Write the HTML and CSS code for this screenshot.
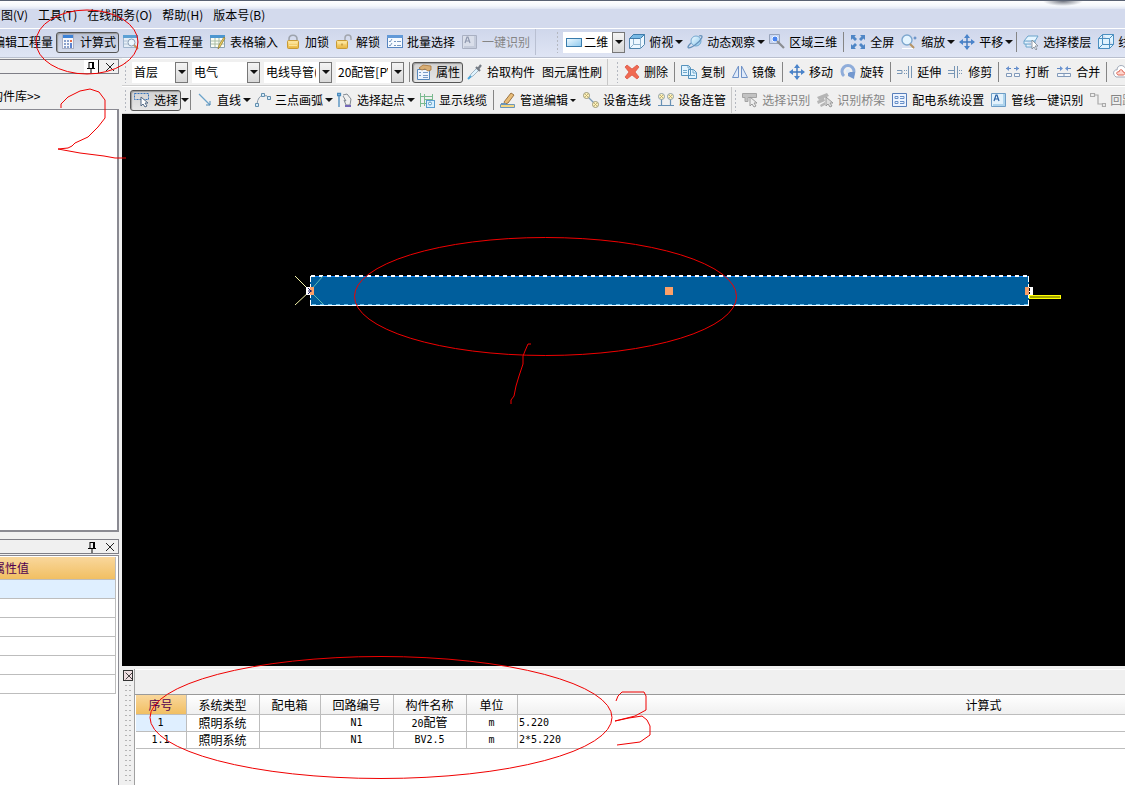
FILE: index.html
```html
<!DOCTYPE html>
<html lang="zh-CN">
<head>
<meta charset="utf-8">
<title>计算式</title>
<link rel="stylesheet" href="styles.css">
</head>
<body>
<svg class="sprite" aria-hidden="true">
  <defs>
    <linearGradient id="gold" x1="0" y1="0" x2="0" y2="1"><stop offset="0" stop-color="#ffe9a0"/><stop offset="1" stop-color="#e8b33c"/></linearGradient>
    <linearGradient id="sky" x1="0" y1="0" x2="1" y2="1"><stop offset="0" stop-color="#f0faff"/><stop offset="1" stop-color="#8cc8ee"/></linearGradient>
  </defs>
  <symbol id="calc" viewBox="0 0 16 16"><rect x="2.500" y=".5" width="11" height="14" fill="#f7f8fc" stroke="#a9b0c4"/><path d="M3 1h10v3H3z" fill="#3d82d6"/><path d="M4 6h2v2H4zM7 6h2v2H7zM4 9h2v2H4zM7 9h2v2H7zM4 12h2v2H4zM7 12h2v2H7z" fill="#8ba2cc"/><path d="M10 6h2v2h-2z" fill="#e46a4a"/><path d="M10 9h2v5h-2z" fill="#5c83d0"/></symbol>
  <symbol id="view" viewBox="0 0 16 16"><path d="M.5 1.500h14v12H.5z" fill="#e4edf6" stroke="#9fb4cc"/><path d="M0 1h15v3H0z" fill="#5ca0d4"/><path d="M1 7h4M1 10h4" stroke="#b2c4d8"/><circle cx="8.500" cy="8.500" r="3.500" fill="#edf8ff" stroke="#8b9db4"/><path d="M11 11l4 4" stroke="#c09868" stroke-width="2"/></symbol>
  <symbol id="sheet" viewBox="0 0 16 16"><path d="M.5 1.500h14v12H.5z" fill="#fbfdf6" stroke="#8da3b0"/><path d="M0 1h15v3H0z" fill="#4c96d0"/><path d="M1 7h13M1 10h13M5 4v9M9 4v9" stroke="#a9bda4"/><path d="M14 3l1 1-5 9-2 2 1-4z" fill="#f5d660" stroke="#8b7430" stroke-width=".7"/></symbol>
  <symbol id="lock" viewBox="0 0 16 16"><path d="M4 8V5c0-5 8-5 8 0v3" fill="none" stroke="#9da3ad" stroke-width="1.600"/><rect x="2.500" y="6.500" width="11" height="8" rx="1" fill="url(#gold)" stroke="#c89a35"/><path d="M4 9h8M4 11.500h8" stroke="#fff0b4" stroke-width=".7"/></symbol>
  <symbol id="unlock" viewBox="0 0 16 16"><path d="M9 7V4c0-4 6-4 6 0v2" fill="none" stroke="#a2a6ae" stroke-width="1.500"/><rect x=".5" y="6.500" width="11" height="8" rx="1" fill="url(#gold)" stroke="#c89a35"/><path d="M2 9h8" stroke="#fff0b4" stroke-width=".7"/><path d="M6 9.500v2" stroke="#a67a20"/></symbol>
  <symbol id="batch" viewBox="0 0 16 16"><rect x=".5" y="1.500" width="15" height="12" fill="#f6faff" stroke="#5684bf"/><path d="M0 1h16v3H0z" fill="#6299d8"/><path d="M2 7l1 1 2-3M2 11l1 1 2-3M7 7.500h2m1 0h4M7 11.500h2m1 0h4" fill="none" stroke="#7898c0"/></symbol>
  <symbol id="autooff" viewBox="0 0 16 16"><path d="M.5 1.500h14v13H.5z" fill="#d9deea" stroke="#a9b0c2"/><path d="M12 2h2v12H2v-2h10z" fill="#c4cbdb"/><path d="M3 9l2-6h1l2 6M4 7h3" fill="none" stroke="#8f98ae" stroke-width="1.200"/></symbol>
  <symbol id="auto" viewBox="0 0 16 16"><path d="M.5 1.500h14v13H.5z" fill="#e3f2fc" stroke="#6d9dc6"/><path d="M12 2h2v12H2v-2h10z" fill="#aed4ed"/><path d="M3 9l2-6h1l2 6M4 7h3" fill="none" stroke="#2860a4" stroke-width="1.200"/></symbol>
  <symbol id="flat" viewBox="0 0 16 16"><rect x=".5" y="4.500" width="15" height="8" fill="url(#sky)" stroke="#397cac"/></symbol>
  <symbol id="cube" viewBox="0 0 16 16"><path d="M.5 4.500l4-4h11v10l-4 4H.5z" fill="#edf7ff" stroke="#5084ac"/><path d="M.5 4.500l4-4h11l-4 4z" fill="#78b9e5" stroke="#3f7cac"/><path d="M11.500 4.500v10M4.500 5v5.500H11M1 14l3.500-3.500" fill="none" stroke="#8fb2cd"/></symbol>
  <symbol id="wire" viewBox="0 0 16 16"><path d="M.5 4.500l4-4h11v10l-4 4H.5zM.5 4.500h11v10M11.500 4.500l4-4M4.500.5v10h11M.5 14.500l4-4" fill="#dff3ff" stroke="#4b8fc0"/></symbol>
  <symbol id="orbit" viewBox="0 0 16 16"><circle cx="9" cy="7" r="5" fill="url(#sky)" stroke="#73a8d0"/><path d="M4 9C-2 15 2 15 8 11S18 0 12 2" fill="none" stroke="#6591ba" stroke-width="1.300"/></symbol>
  <symbol id="region" viewBox="0 0 16 16"><path d="M.5.5h10v9H.5z" fill="#c7d5f3" stroke="#97a3ba"/><circle cx="6" cy="5" r="3" fill="#4a83ef" stroke="#eef7ff"/><path d="M8 7l7 7" stroke="#8a8d91" stroke-width="2.200"/></symbol>
  <symbol id="full" viewBox="0 0 16 16"><path d="M1 1h5L4.500 2.500 7 5 5 7 2.500 4.500 1 6zM15 1v5l-1.500-1.500L11 7 9 5l2.500-2.500L10 1zM1 15v-5l1.500 1.500L5 9l2 2-2.500 2.500L6 15zM15 15h-5l1.500-1.500L9 11l2-2 2.500 2.500L15 10z" fill="#4f86c6"/></symbol>
  <symbol id="zoom" viewBox="0 0 16 16"><circle cx="6" cy="6" r="5" fill="#e4f4ff" stroke="#7da7cf" stroke-width="1.400"/><path d="M9 10l4 4" stroke="#b79565" stroke-width="2.200"/><path d="M12.500 4h3M14 2.500v3" stroke="#4a7fbe"/><path d="M1 14.500h11" stroke="#fff"/></symbol>
  <symbol id="move" viewBox="0 0 16 16"><path d="M8 1v14M1 8h14" stroke="#3e76bc" stroke-width="1.400"/><path d="M5 4l3-4 3 4zM5 12l3 4 3-4zM4 5L0 8l4 3zM12 5l4 3-4 3z" fill="#4a84cb"/></symbol>
  <symbol id="floor" viewBox="0 0 16 16"><path d="M1 7l4-5h10L12 7zM1 7v3h7M3 10v3h6M12 7v2" fill="#e5f5ff" stroke="#6aa4cb"/><path d="M9 6l6 6-3 0 2 3-1 1-2-3-2 2z" fill="#fff" stroke="#7b8591" stroke-width=".8"/></symbol>
  <symbol id="props" viewBox="0 0 16 16"><path d="M1.500 5.500h12v10h-12z" fill="#eff6ff" stroke="#5688bc"/><path d="M3 8.500h2M3 11.500h2M7 8.500h5M7 11.500h5M7 13.500h5" stroke="#7a9cc8"/><path d="M3 4l4-3 8 1v4l-3 1-3-2-3 1-2-1z" fill="#d8ae75" stroke="#a87437" stroke-width=".8"/></symbol>
  <symbol id="dropper" viewBox="0 0 16 16"><path d="M2 14l2-4 6-6 2 2-6 6z" fill="#dff4ff" stroke="#91a4b5" stroke-width=".8"/><path d="M9 3l4 4M11 5l3-4" stroke="#777d86" stroke-width="2.200"/><path d="M1 15l3-3" stroke="#4ca7dc" stroke-width="2"/></symbol>
  <symbol id="delete" viewBox="0 0 16 16"><path d="M1 3l2-2 5 4 5-4 2 2-4 5 4 5-2 2-5-4-5 4-2-2 4-5z" fill="#f06a52" stroke="#d84e3b" stroke-width=".7"/></symbol>
  <symbol id="copy" viewBox="0 0 16 16"><path d="M.5 1.500h7l2 2v8h-9zM7.500 5.500h5l3 3v6h-8z" fill="#e2f4ff" stroke="#5793bd"/><path d="M7 2v2h2M12 6v3h3M2 6.500h4M2 8.500h4M9 11.500h5" fill="none" stroke="#72a9cb"/></symbol>
  <symbol id="mirror" viewBox="0 0 16 16"><path d="M6.500 2v11.500h-6zM9.500 2v11.500h6z" fill="#e0ebfa" stroke="#6f92c7"/></symbol>
  <symbol id="rotate" viewBox="0 0 16 16"><path d="M4 12A6 6 0 1 1 12 12" fill="none" stroke="#8fadda" stroke-width="3"/><path d="M8 8h7l-1 7-6-3z" fill="#7398cf"/><circle cx="8" cy="7" r="2" fill="#dceafa"/></symbol>
  <symbol id="extend" viewBox="0 0 16 16"><path d="M0 6.500h5v3H0M7 6.500h1M7 9.500h1M9 6.500h1M9 9.500h1M11.500 2v12M14.500 2v12" fill="none" stroke="#7896b5"/></symbol>
  <symbol id="trim" viewBox="0 0 16 16"><path d="M0 6.500h6M0 9.500h6M6.500 2v12M9.500 2v12M11 6.500h1m1 0h1M11 9.500h1m1 0h1" fill="none" stroke="#7896b5"/></symbol>
  <symbol id="break" viewBox="0 0 16 16"><path d="M1 4.500h5M9 4.500h5" stroke="#5d86c3"/><path d="M4 2L1 4.500 4 7zM11 2l3 2.500L11 7z" fill="#6a92cf"/><path d="M1.500 9.500h5v3h-5zM9.500 9.500h5v3h-5z" fill="#f5f8fc" stroke="#8199b9"/></symbol>
  <symbol id="join" viewBox="0 0 16 16"><path d="M1 4.500h5M10 4.500h5" stroke="#5d86c3"/><path d="M4 2l3 2.500L4 7zM12 2L9 4.500 12 7z" fill="#6a92cf"/><path d="M1.500 9.500h13v3h-13zM8 10v2" fill="#f5f8fc" stroke="#8199b9"/></symbol>
  <symbol id="cloud" viewBox="0 0 16 16"><path d="M3 13C-2 9 2 5 4 6c0-6 8-6 9 0 5 1 2 7 0 7z" fill="#fff" stroke="#9fa8b8"/><path d="M5 11c-3-2 0-4 1-3 0-3 4-3 4 0 3 0 2 3 0 3z" fill="#ffd5ce" stroke="#dc6655"/></symbol>
  <symbol id="select" viewBox="0 0 16 16"><path d="M.5 1.500h14v6H.5z" fill="none" stroke="#3674bd" stroke-dasharray="2 1"/><path d="M7 5v9l2-2 2 3 2-1-2-3h3z" fill="#fff" stroke="#516985"/></symbol>
  <symbol id="line" viewBox="0 0 16 16"><path d="M2 2l11 11" stroke="#6ba3ca" stroke-width="1.300"/><path d="M13 9v4H9" fill="none" stroke="#4e89b5"/></symbol>
  <symbol id="arc" viewBox="0 0 16 16"><path d="M2 12Q3 4 8 3.500T14 6" fill="none" stroke="#8b9aa9"/><path d="M.5 11.500h3v3h-3zM6.500 1.500h3v3h-3zM12.500 4.500h3v3h-3z" fill="#d5ebfb" stroke="#628fae"/></symbol>
  <symbol id="origin" viewBox="0 0 16 16"><path d="M.5 1.500h3v2h-3zM2 4v11" fill="#d6eeff" stroke="#498abd" stroke-width="1.300"/><path d="M6 3l4-1 4 5-1 6H9L7 8l2 1-3-5" fill="#f0f0f0" stroke="#828991"/><path d="M8 14h6" stroke="#7467b8" stroke-width="2"/></symbol>
  <symbol id="cable" viewBox="0 0 16 16"><path d="M1.500 1v14M5.500 2v12M1 4.500h13M1 11.500h6M5 7.500h9M13.500 2v6" fill="none" stroke="#7ab98f"/><rect x="7.500" y="8.500" width="8" height="7" fill="#d7efff" stroke="#5a9dce"/><circle cx="11" cy="11.500" r="1.500" fill="#fff" stroke="#5595be"/></symbol>
  <symbol id="edit" viewBox="0 0 16 16"><path d="M4 10l7-9 3 2-6 8-3 1z" fill="#e9bd78" stroke="#9b7544"/><path d="M1 11.500h5M.5 12.500h14v3H.5z" fill="#f4d781" stroke="#6c96b9"/></symbol>
  <symbol id="link" viewBox="0 0 16 16"><path d="M5 5l6 6" stroke="#7b9bb6" stroke-width="1.300"/><circle cx="3.500" cy="3.500" r="3" fill="#fff2bc" stroke="#9b9878"/><circle cx="12.500" cy="12.500" r="3" fill="#fff2bc" stroke="#9b9878"/><path d="M2 2l3 3M5 2L2 5M11 11l3 3M14 11l-3 3" stroke="#b4a568" stroke-width=".8"/></symbol>
  <symbol id="pipe" viewBox="0 0 16 16"><path d="M3.500 7v6M12.500 7v6M0 13.500h16" stroke="#6790b4" stroke-width="1.200"/><circle cx="3.500" cy="4.500" r="3" fill="#fff2bc" stroke="#8d9fa7"/><circle cx="12.500" cy="4.500" r="3" fill="#fff2bc" stroke="#8d9fa7"/><path d="M2 3l3 3M5 3L2 6M11 3l3 3M14 3l-3 3" stroke="#b4a568" stroke-width=".8"/></symbol>
  <symbol id="pick" viewBox="0 0 16 16"><path d="M.5 1.500h14v4H6v4H3V5.500H.5z" fill="#c2c2c2" stroke="#a4a4a4"/><path d="M8 5v9l2-2 2 3 2-1-2-3h3z" fill="#eee" stroke="#999"/></symbol>
  <symbol id="tray" viewBox="0 0 16 16"><path d="M0 5l10-4 2 3L2 8zM0 9l7-3 1 3-7 3zM3 13l5-3v3l-4 2z" fill="#b5b5b5"/><path d="M9 5v9l2-2 2 3 2-1-2-3h3z" fill="#ddd" stroke="#999"/></symbol>
  <symbol id="config" viewBox="0 0 16 16"><path d="M.5 1.500h14v13H.5z" fill="#edf4ff" stroke="#587fba"/><path d="M3 4.500h3v2H3zM3 9.500h3v2H3zM8 4.500h4v2H8M8 9.500h4v2H8" fill="none" stroke="#6a91c8"/></symbol>
  <symbol id="route" viewBox="0 0 16 16"><path d="M.5 1.500h4v3h-4zM5 3h3v9h4M12.500 11.500h3v3h-3z" fill="none" stroke="#aaa" stroke-width="1.200"/></symbol>
  <symbol id="pin" viewBox="0 0 12 12"><path d="M4 1.500h4v5M4 1v6M2 7.500h8M6 8v4" fill="none" stroke="#000"/><path d="M7 1h2v6H7z"/></symbol>
  <symbol id="close" viewBox="0 0 12 12"><path d="M2 2l8 8M10 2l-8 8" stroke="#222"/></symbol>
</svg>

<header class="top">
  <div class="strip"></div>
  <nav class="menu">
    <button>图(V)</button><button>工具(T)</button><button>在线服务(O)</button><button>帮助(H)</button><button>版本号(B)</button>
  </nav>
  <div class="bar bar-blue">
    <div class="group first">
      <button class="tool cut">编辑工程量</button>
      <button class="tool pressed"><svg><use href="#calc"/></svg>计算式</button>
      <button class="tool"><svg><use href="#view"/></svg>查看工程量</button>
      <button class="tool"><svg><use href="#sheet"/></svg>表格输入</button>
      <button class="tool"><svg><use href="#lock"/></svg>加锁</button>
      <button class="tool"><svg><use href="#unlock"/></svg>解锁</button>
      <button class="tool"><svg><use href="#batch"/></svg>批量选择</button>
      <button class="tool" disabled><svg><use href="#autooff"/></svg>一键识别</button>
    </div>
    <div class="group far">
      <span class="handle"></span>
      <label class="combo view-mode"><svg><use href="#flat"/></svg><select aria-label="视图"><option>二维</option></select><span class="arrow"></span></label>
      <button class="tool drop"><svg><use href="#cube"/></svg>俯视</button>
      <button class="tool drop"><svg><use href="#orbit"/></svg>动态观察</button>
      <button class="tool"><svg><use href="#region"/></svg>区域三维</button>
      <span class="sep"></span>
      <button class="tool"><svg><use href="#full"/></svg>全屏</button>
      <button class="tool drop"><svg><use href="#zoom"/></svg>缩放</button>
      <button class="tool drop"><svg><use href="#move"/></svg>平移</button>
      <span class="sep"></span>
      <button class="tool"><svg><use href="#floor"/></svg>选择楼层</button>
      <button class="tool"><svg><use href="#wire"/></svg>线框</button>
    </div>
  </div>
</header>

<main class="work">
  <aside class="side">
    <div class="dock-title"><button class="raised" aria-label="固定"><svg><use href="#pin"/></svg></button><button aria-label="关闭"><svg><use href="#close"/></svg></button></div>
    <div class="library"><span>构件库&gt;&gt;</span></div>
    <div class="list"></div>
    <div class="dock-title"><button aria-label="固定"><svg><use href="#pin"/></svg></button><button aria-label="关闭"><svg><use href="#close"/></svg></button></div>
    <div class="property">
      <table>
        <thead><tr><th><span>属性值</span></th></tr></thead>
        <tbody><tr class="current"><td></td></tr><tr><td></td></tr><tr><td></td></tr><tr><td></td></tr><tr><td></td></tr><tr><td></td></tr></tbody>
      </table>
    </div>
  </aside>

  <section class="stage">
    <div class="bar">
      <div class="group lead">
        <span class="handle"></span>
        <label class="combo short"><select aria-label="楼层"><option>首层</option></select><span class="arrow"></span></label>
        <label class="combo"><select aria-label="专业"><option>电气</option></select><span class="arrow"></span></label>
        <label class="combo"><select aria-label="构件类型"><option>电线导管(</option></select><span class="arrow"></span></label>
        <label class="combo"><select aria-label="构件"><option>20配管[PV</option></select><span class="arrow"></span></label>
        <span class="sep"></span>
        <button class="tool pressed"><svg><use href="#props"/></svg>属性</button>
        <button class="tool"><svg><use href="#dropper"/></svg>拾取构件</button>
        <button class="tool">图元属性刷</button>
      </div>
      <div class="group next">
        <span class="handle"></span>
        <button class="tool"><svg><use href="#delete"/></svg>删除</button>
        <span class="sep"></span>
        <button class="tool"><svg><use href="#copy"/></svg>复制</button>
        <button class="tool"><svg><use href="#mirror"/></svg>镜像</button>
        <span class="sep"></span>
        <button class="tool"><svg><use href="#move"/></svg>移动</button>
        <button class="tool"><svg><use href="#rotate"/></svg>旋转</button>
        <span class="sep"></span>
        <button class="tool"><svg><use href="#extend"/></svg>延伸</button>
        <button class="tool"><svg><use href="#trim"/></svg>修剪</button>
        <span class="sep"></span>
        <button class="tool"><svg><use href="#break"/></svg>打断</button>
        <button class="tool"><svg><use href="#join"/></svg>合并</button>
        <span class="sep"></span>
        <button class="tool" aria-label="云线"><svg><use href="#cloud"/></svg></button>
      </div>
    </div>
    <div class="bar">
      <div class="group lead">
        <span class="handle"></span>
        <button class="tool pressed"><svg><use href="#select"/></svg>选择</button>
        <button class="tool drop bare" aria-label="选择方式"></button>
        <span class="sep"></span>
        <button class="tool drop"><svg><use href="#line"/></svg>直线</button>
        <button class="tool drop"><svg><use href="#arc"/></svg>三点画弧</button>
        <button class="tool drop"><svg><use href="#origin"/></svg>选择起点</button>
        <button class="tool"><svg><use href="#cable"/></svg>显示线缆</button>
        <span class="sep"></span>
        <button class="tool drop small"><svg><use href="#edit"/></svg>管道编辑</button>
        <button class="tool"><svg><use href="#link"/></svg>设备连线</button>
        <button class="tool"><svg><use href="#pipe"/></svg>设备连管</button>
      </div>
      <div class="group">
        <span class="handle"></span>
        <button class="tool" disabled><svg><use href="#pick"/></svg>选择识别</button>
        <button class="tool" disabled><svg><use href="#tray"/></svg>识别桥架</button>
        <button class="tool"><svg><use href="#config"/></svg>配电系统设置</button>
        <button class="tool"><svg><use href="#auto"/></svg>管线一键识别</button>
        <button class="tool" disabled><svg><use href="#route"/></svg>回路</button>
      </div>
    </div>

    <div class="canvas">
      <svg class="drawing" width="1003" height="551" viewBox="122 114 1003 551">
        <rect x="310" y="276" width="719" height="29" fill="#005e9c"/>
        <path d="M310 276.500h719" stroke="#0a84ff"/>
        <path d="M311 276h718" stroke="#fff" stroke-width="2" stroke-dasharray="4 4"/>
        <path d="M310 305.500h719" stroke="#fff"/>
        <path d="M312 304.500h717" stroke="#62c2f4" stroke-dasharray="4 4"/>
        <path d="M310.500 276v29M1028.500 276v29" stroke="#fff" stroke-dasharray="6 2"/>
        <path d="M295 276l15 15-15 14" fill="none" stroke="#f4f4a8"/>
        <path d="M323 276l-13 15 13 13" fill="none" stroke="#5ab8b0"/>
        <path d="M306 287h4v8h-4z" fill="#fff"/><path d="M310 287h4v8h-4z" fill="#fca068"/>
        <path d="M308 288l3 3-3 3M308 291h4" fill="none" stroke="#1a1a60"/>
        <path d="M665 287h8v8h-8zM1025 287h4v8h-4z" fill="#fca068"/>
        <path d="M1029 287h4v8h-4z" fill="#fff"/><path d="M1029.500 288v6" stroke="#000" stroke-dasharray="3 1"/>
        <rect x="1029.500" y="295.500" width="31" height="3" fill="#a4a400" stroke="#ff0"/>
      </svg>
    </div>

    <div class="results">
      <div class="grip"><button aria-label="关闭"><svg><use href="#close"/></svg></button><span class="dots"></span></div>
      <div class="sheet">
        <div class="sheet-head"></div>
        <table>
          <colgroup><col class="w-no"><col class="w-wide"><col class="w-box"><col class="w-wide"><col class="w-wide"><col class="w-unit"><col class="w-formula"></colgroup>
          <thead><tr><th class="active">序号</th><th>系统类型</th><th>配电箱</th><th>回路编号</th><th>构件名称</th><th>单位</th><th>计算式</th></tr></thead>
          <tbody>
            <tr><td class="current num">1</td><td>照明系统</td><td></td><td class="num">N1</td><td><span class="num">20</span>配管</td><td class="num">m</td><td class="num formula">5.220</td></tr>
            <tr><td class="num">1.1</td><td>照明系统</td><td></td><td class="num">N1</td><td class="num">BV2.5</td><td class="num">m</td><td class="num formula">2*5.220</td></tr>
          </tbody>
        </table>
      </div>
    </div>
  </section>
</main>

<svg class="notes" width="1125" height="785" viewBox="0 0 1125 785" aria-hidden="true">
  <ellipse cx="87" cy="42" rx="51" ry="32"/>
  <path d="M61 108v-4l7-7 12-6 10-2 9 3 6 8v18l-7 9-10 10-13 6-3 3-4 2-10 1 22 4 24 3 11 2h11"/>
  <ellipse cx="545.500" cy="296.500" rx="191" ry="59"/>
  <path d="M531 344h-3l-3 7-2 5v8l-4 12-3 10-2 10-3 4v4"/>
  <ellipse cx="381" cy="717.500" rx="231" ry="61"/>
  <path d="M616 701l2-5 4-4h22l2 4v14l-11 6-20 5 14-3 13-2 5 4 3 6v9l-10 7-23 3"/>
</svg>
</body>
</html>
```
FILE: styles.css
```css
* { box-sizing: border-box; }

body {
  margin: 0;
  height: 100vh;
  display: flex;
  flex-direction: column;
  position: relative;
  overflow: hidden;
  background: #f0f0f0;
  color: #000;
  font: 12px/16px "Noto Sans CJK SC", "Noto Sans", sans-serif;
}

button, select {
  font: inherit;
  color: inherit;
  background: none;
  border: 0;
  padding: 0;
  white-space: nowrap;
}

.sprite { position: absolute; width: 0; height: 0; }

/* Header */
.top { background: #d3daed; flex: none; }
.strip {
  height: 9px;
  border-top: 1px solid #596273;
  background:
    radial-gradient(ellipse 20px 5px at calc(100% - 62px) 0, #6d727e, transparent),
    linear-gradient(#fff, #f4f7fc 60%, #dfe5f3);
}
.menu { height: 19px; display: flex; align-items: flex-start; gap: 10px; padding-left: 1px; }
.menu button { line-height: 11px; }

/* Toolbars */
.bar { height: 28px; display: flex; overflow: hidden; border-top: 1px solid #fff; border-bottom: 1px solid #d0d0d0; }
.bar-blue { height: 30px; padding-bottom: 2px; background: linear-gradient(#cfd7eb, #dfe5f4); border-bottom-color: #b9bfce; }
.group { display: flex; align-items: center; flex: none; }
.group.first { padding-right: 2px; border-right: 1px solid #b9c0d2; }
.group.lead { padding-right: 2px; border-right: 1px solid #c8c8c8; }
.group.far { margin-left: 18px; }
.group.next { margin-left: 6px; }
.handle {
  width: 3px;
  height: 22px;
  margin: 0 1px 0 2px;
  background: radial-gradient(circle, #b4b8c0 1px, transparent 1px) 0 0 / 3px 4px;
}
.lead .handle { margin-right: 3px; }

.tool { display: flex; align-items: center; gap: 4px; height: 20px; margin: 0 3px 0 4px; flex: none; }
.tool svg, .combo svg { width: 16px; height: 16px; flex: none; }
.tool.cut { margin-left: -7px; }
.tool:disabled { color: #858585; }
.tool.pressed {
  margin: 0;
  height: 21px;
  padding: 0 2px 0 3px;
  border: 1px solid #555;
  border-radius: 3px;
  background: linear-gradient(#d2d2d2, #e6e6e6);
  box-shadow: inset 1px 1px 1px #999;
}
.bar-blue .pressed { background: linear-gradient(#bcc4d8, #d5dcec); }
.tool.drop { margin-right: 0; gap: 2px; }
.tool.drop::after, .arrow::after {
  content: "";
  border: 4px solid transparent;
  border-top-color: #111;
  border-bottom: 0;
}
.tool.drop svg { margin-right: 2px; }
.tool.drop.small::after { border-width: 3px; border-bottom: 0; }
.tool.drop.small { margin-right: 3px; }
.tool.drop.bare { margin: 0; }
.sep { width: 1px; height: 20px; margin: 0 2px 0 3px; background: #858585; }
.bare + .sep { margin-left: 1px; }

.combo { display: flex; align-items: center; width: 68px; height: 21px; margin: 0 2px; background: #fff; }
.combo.short { width: 56px; }
.combo.view-mode { width: 62px; padding-left: 3px; margin: 0 0 0 3px; }
.combo select { appearance: none; flex: 1; min-width: 0; padding-left: 2px; margin-right: 3px; overflow: hidden; text-overflow: clip; }
.arrow {
  width: 13px;
  height: 21px;
  display: grid;
  place-items: center;
  border: 1px solid #777;
  background: linear-gradient(#f4f4f4, #d8d8d8);
}

/* Work area */
.work { flex: 1; min-height: 0; display: grid; grid-template-columns: 119px minmax(0, 1fr); column-gap: 3px; }
.side { display: flex; flex-direction: column; min-height: 0; padding-top: 1px; }
.dock-title {
  height: 15px;
  display: flex;
  align-items: center;
  justify-content: flex-end;
  gap: 3px;
  padding-right: 1px;
  border: 1px solid #7e7e86;
  border-left: 0;
  flex: none;
}
.dock-title button { width: 15px; height: 13px; display: grid; place-items: center; }
.dock-title .raised { background: #fff; border-right: 1px solid #222; }
.dock-title svg { width: 12px; height: 12px; }
.library { height: 35px; display: flex; align-items: center; padding-top: 9px; flex: none; }
.library span { margin-left: -9px; white-space: nowrap; }
.list { flex: 1; background: #fff; border: solid #8a8a92; border-width: 1px 2px 2px 0; margin-bottom: 7px; }
.property { height: 230px; flex: none; margin-top: 1px; padding: 1px 2px 0 0; background: #fff; border: solid #8a8a92; border-width: 1px 1px 0 0; }
.property table { width: 100%; border-collapse: collapse; table-layout: fixed; }
.property th, .property td { height: 19px; padding: 0; border: solid #bdbdbd; border-width: 0 1px 1px 0; }
.property th { height: 22px; font-weight: 400; text-align: left; color: #500050; background: linear-gradient(#f9d79c, #f1bf62); }
.property th span { margin-left: -7px; }
.current, .current td { background: #dfefff; }

.stage { display: flex; flex-direction: column; min-width: 0; min-height: 0; }
.canvas { flex: 1; min-height: 0; position: relative; overflow: hidden; background: #000; }
.drawing { position: absolute; left: 0; top: 0; }

/* Results table */
.results { height: 119px; flex: none; display: flex; padding-top: 3px; overflow: hidden; }
.grip { width: 12px; display: flex; flex-direction: column; padding: 0 1px; flex: none; }
.grip button { width: 10px; height: 11px; margin: 1px 0 2px; border: 1px solid #333; background: #eedde0; display: grid; place-items: center; }
.grip svg { width: 10px; height: 10px; }
.dots { flex: 1; margin: 0 1px; background: radial-gradient(circle, #b4b4b4 1px, transparent 1px) 0 0 / 4px 5px; }
.sheet { flex: 1; min-width: 0; overflow: hidden; border-left: 1px solid #a0a0a0; background: #fff; }
.sheet-head { height: 26px; background: #f0f0f0; border-top: 1px solid #fff; border-bottom: 1px solid #9a9a9a; }
.sheet table { width: 1315px; margin-left: 1px; border-collapse: separate; border-spacing: 0; table-layout: fixed; }
.w-no { width: 51px; }
.w-wide { width: 73px; }
.w-box { width: 61px; }
.w-unit { width: 51px; }
.w-formula { width: 933px; }
.sheet th, .sheet td { height: 17px; padding: 0 1px 0 0; line-height: 14px; text-align: center; border: solid #bdbdbd; border-width: 0 1px 1px 0; white-space: nowrap; }
.sheet th { height: 20px; font-weight: 400; background: linear-gradient(#fff, #f0f0f0); }
.sheet th.active { color: #500050; background: linear-gradient(#f9d79c, #f1bf62); }
.sheet .num { font-family: "DejaVu Sans Mono", monospace; font-size: 10px; }
.sheet td.formula { text-align: left; padding-left: 1px; }

/* Red pen marks */
.notes { position: absolute; left: 0; top: 0; pointer-events: none; fill: none; stroke: #f00000; stroke-width: 1; }
```
